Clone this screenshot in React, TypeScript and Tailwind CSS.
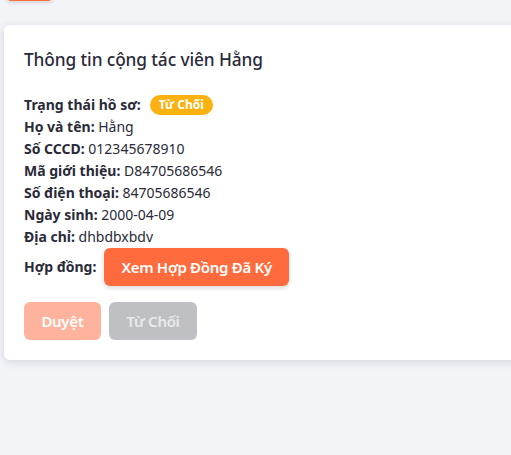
import React from "react";

const rows: [string, string][] = [
  ["Họ và tên:", "Hằng"],
  ["Số CCCD:", "012345678910"],
  ["Mã giới thiệu:", "D84705686546"],
  ["Số điện thoại:", "84705686546"],
  ["Ngày sinh:", "2000-04-09"],
  ["Địa chỉ:", "dhbdbxbdv"],
];

export default function App() {
  return (
    <div
      className="w-[511px] h-[455px] overflow-hidden bg-[#f3f4f8] text-[#2a2a38]"
      style={{ fontFamily: '"Noto Sans", "Open Sans", sans-serif' }}
    >
      <div className="pl-[7px]">
        <div className="w-[45px] h-[30px] -mt-[29px] rounded-[4px] bg-[#ff6b3d] shadow-[0_2px_4px_rgba(0,0,0,0.12)]" />
      </div>
      <div className="ml-[4px] mt-[24px] w-[560px] rounded-[6px] bg-white px-[20px] pt-[21px] pb-[20px] shadow-[0_2px_8px_rgba(40,40,80,0.15)]">
        <div className="text-[17.3px] leading-[28px] font-medium tracking-[-0.1px]">Thông tin cộng tác viên Hằng</div>
        <div className="mt-[20px] text-[14px] leading-[22px]">
          <div className="flex items-center">
            <span className="font-bold">Trạng thái hồ sơ:</span>
            <span className="ml-[9px] inline-flex h-[20px] items-center rounded-full bg-[#fbb110] px-[9px] text-[12px] font-bold text-white">
              Từ Chối
            </span>
          </div>
          {rows.map(([k, v]) => (
            <div key={k}>
              <span className="font-bold">{k}</span> {v}
            </div>
          ))}
          <div className="flex items-center">
            <span className="font-bold">Hợp đồng:</span>
            <button className="ml-[8px] h-[38px] rounded-[6px] bg-[#ff6b3d] px-[17px] text-[15px] font-semibold tracking-[-0.3px] text-white shadow-[0_2px_5px_rgba(0,0,0,0.15)]">
              Xem Hợp Đồng Đã Ký
            </button>
          </div>
          <div className="mt-[16px] flex gap-[8px]">
            <button className="h-[38px] w-[77px] rounded-[6px] bg-[#ffb39c] text-[15px] font-semibold tracking-[-0.3px] text-white">
              Duyệt
            </button>
            <button className="h-[38px] w-[88px] rounded-[6px] bg-[#bfc0c4] text-[15px] font-semibold tracking-[-0.3px] text-[#e9eaee]">
              Từ Chối
            </button>
          </div>
        </div>
      </div>
    </div>
  );
}
